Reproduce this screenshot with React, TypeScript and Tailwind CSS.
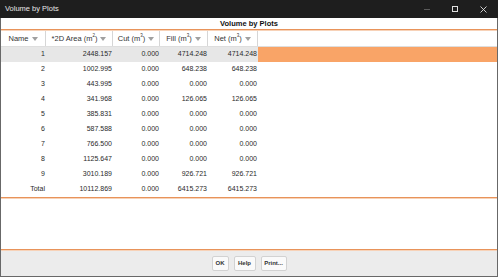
import React from "react";

interface IRow {
  name: string;
  area: string;
  cut: string;
  fill: string;
  net: string;
}

const rows: IRow[] = [
  { name: "1", area: "2448.157", cut: "0.000", fill: "4714.248", net: "4714.248" },
  { name: "2", area: "1002.995", cut: "0.000", fill: "648.238", net: "648.238" },
  { name: "3", area: "443.995", cut: "0.000", fill: "0.000", net: "0.000" },
  { name: "4", area: "341.968", cut: "0.000", fill: "126.065", net: "126.065" },
  { name: "5", area: "385.831", cut: "0.000", fill: "0.000", net: "0.000" },
  { name: "6", area: "587.588", cut: "0.000", fill: "0.000", net: "0.000" },
  { name: "7", area: "766.500", cut: "0.000", fill: "0.000", net: "0.000" },
  { name: "8", area: "1125.647", cut: "0.000", fill: "0.000", net: "0.000" },
  { name: "9", area: "3010.189", cut: "0.000", fill: "926.721", net: "926.721" },
  { name: "Total", area: "10112.869", cut: "0.000", fill: "6415.273", net: "6415.273" },
];

function SortArrow() {
  return (
    <svg width="6" height="4" viewBox="0 0 6 4" className="ml-[3px] shrink-0">
      <polygon points="0,0 6,0 3,4" fill="#a0a0a0" />
    </svg>
  );
}

function HeadCell({ w, children }: { w: string; children: React.ReactNode }) {
  return (
    <div
      className={[
        w,
        "h-full flex items-center justify-center border-r border-[#d6d6d6] shrink-0",
      ].join(" ")}
    >
      <span className="flex items-center">{children}</span>
      <SortArrow />
    </div>
  );
}

function OrangeLine() {
  return (
    <div className="flex flex-col shrink-0">
      <div className="h-px bg-[#e8935a]" />
      <div className="h-px bg-[#f7d2b8]" />
    </div>
  );
}

function FooterButton({ children, w }: { children: React.ReactNode; w: string }) {
  return (
    <button
      type="button"
      className={[
        w,
        "h-[15px] bg-[#fafafa] border border-[#d2d2d2] rounded-[2px] text-[6px] font-bold text-[#333] flex items-center justify-center",
      ].join(" ")}
    >
      {children}
    </button>
  );
}

function App() {
  const cols = ["w-[45px]", "w-[67px]", "w-[47px]", "w-[48px]", "w-[50px]"];

  return (
    <div
      className="w-[498px] h-[277px] flex flex-col bg-white overflow-hidden"
      style={{ fontFamily: '"Liberation Sans", Arial, sans-serif' }}
    >
      {/* title bar */}
      <div className="h-[18px] bg-[#1e1e1e] flex items-center shrink-0">
        <span className="pl-[5px] text-[7.5px] text-[#e6e6e6]">Volume by Plots</span>
        <div className="ml-auto flex items-center h-full">
          <div className="w-[30px] flex justify-center">
            <div className="w-[6px] h-px bg-[#5a5a5a]" />
          </div>
          <div className="w-[26px] flex justify-center">
            <div className="w-[6px] h-[6px] border border-[#e0e0e0]" />
          </div>
          <div className="w-[30px] flex justify-center">
            <svg width="7" height="7" viewBox="0 0 7 7">
              <path d="M0.5 0.5 L6.5 6.5 M6.5 0.5 L0.5 6.5" stroke="#e0e0e0" strokeWidth="0.9" />
            </svg>
          </div>
        </div>
      </div>

      {/* body */}
      <div className="flex-1 flex flex-col border-x border-b border-[#686868] text-[#2a2a2a]">
        <div className="h-[11px] flex items-center justify-center text-[7.5px] font-bold text-[#111] shrink-0">
          Volume by Plots
        </div>
        <OrangeLine />

        {/* header */}
        <div className="h-[16px] flex border-b border-[#dedede] text-[7.5px] text-[#333] shrink-0">
          <HeadCell w={cols[0]}>Name</HeadCell>
          <HeadCell w={cols[1]}>
            *2D Area (m<sup className="text-[4.5px]">2</sup>)
          </HeadCell>
          <HeadCell w={cols[2]}>
            Cut (m<sup className="text-[4.5px]">3</sup>)
          </HeadCell>
          <HeadCell w={cols[3]}>
            Fill (m<sup className="text-[4.5px]">3</sup>)
          </HeadCell>
          <HeadCell w={cols[4]}>
            Net (m<sup className="text-[4.5px]">3</sup>)
          </HeadCell>
          <div className="flex-1" />
        </div>

        {/* rows */}
        <div className="flex flex-col text-[7px] shrink-0">
          {rows.map((r, i) => (
            <div key={r.name} className="h-[15px] flex">
              <div className={["flex", i === 0 ? "bg-[#e7e7e7]" : ""].join(" ")}>
                {[r.name, r.area, r.cut, r.fill, r.net].map((v, j) => (
                  <div
                    key={j}
                    className={[cols[j], "h-full flex items-center justify-end pr-px shrink-0"].join(" ")}
                  >
                    {v}
                  </div>
                ))}
              </div>
              <div className={["flex-1", i === 0 ? "bg-[#f9a467]" : ""].join(" ")} />
            </div>
          ))}
        </div>

        <OrangeLine />
        <div className="flex-1" />
        <OrangeLine />

        {/* footer */}
        <div className="h-[25px] bg-[#ececec] flex items-center justify-center gap-[5px] shrink-0">
          <FooterButton w="w-[17px]">OK</FooterButton>
          <FooterButton w="w-[22px]">Help</FooterButton>
          <FooterButton w="w-[26px]">Print...</FooterButton>
        </div>
      </div>
    </div>
  );
}

export default App;
